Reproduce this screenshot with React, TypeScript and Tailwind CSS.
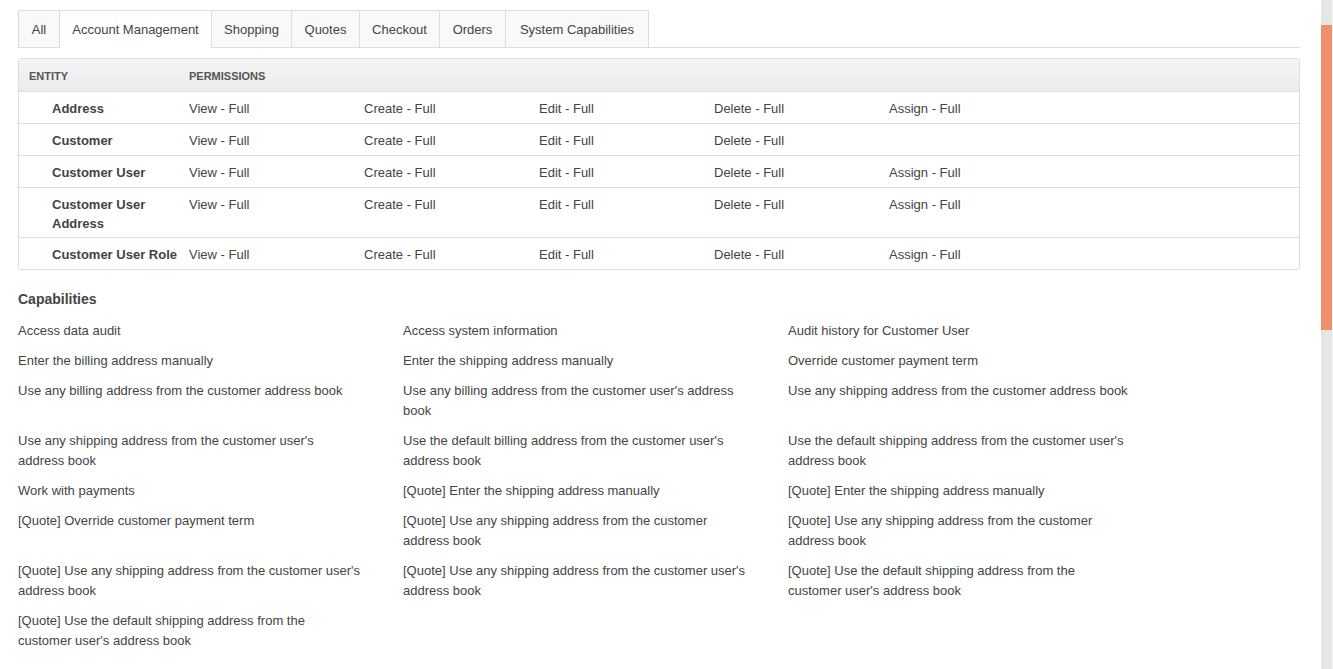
import React from "react";

const tabs = [
  { label: "All", w: "w-[42px]" },
  { label: "Account Management", w: "w-[152px]", active: true },
  { label: "Shopping", w: "w-[80px]" },
  { label: "Quotes", w: "w-[68px]" },
  { label: "Checkout", w: "w-[80px]" },
  { label: "Orders", w: "w-[66px]" },
  { label: "System Capabilities", w: "w-[143px]" },
];

const rows: { name: string; perms: string[] }[] = [
  { name: "Address", perms: ["View - Full", "Create - Full", "Edit - Full", "Delete - Full", "Assign - Full"] },
  { name: "Customer", perms: ["View - Full", "Create - Full", "Edit - Full", "Delete - Full", ""] },
  { name: "Customer User", perms: ["View - Full", "Create - Full", "Edit - Full", "Delete - Full", "Assign - Full"] },
  { name: "Customer User Address", perms: ["View - Full", "Create - Full", "Edit - Full", "Delete - Full", "Assign - Full"] },
  { name: "Customer User Role", perms: ["View - Full", "Create - Full", "Edit - Full", "Delete - Full", "Assign - Full"] },
];

const caps = [
  "Access data audit",
  "Access system information",
  "Audit history for Customer User",
  "Enter the billing address manually",
  "Enter the shipping address manually",
  "Override customer payment term",
  "Use any billing address from the customer address book",
  "Use any billing address from the customer user's address book",
  "Use any shipping address from the customer address book",
  "Use any shipping address from the customer user's address book",
  "Use the default billing address from the customer user's address book",
  "Use the default shipping address from the customer user's address book",
  "Work with payments",
  "[Quote] Enter the shipping address manually",
  "[Quote] Enter the shipping address manually",
  "[Quote] Override customer payment term",
  "[Quote] Use any shipping address from the customer address book",
  "[Quote] Use any shipping address from the customer address book",
  "[Quote] Use any shipping address from the customer user's address book",
  "[Quote] Use any shipping address from the customer user's address book",
  "[Quote] Use the default shipping address from the customer user's address book",
  "[Quote] Use the default shipping address from the customer user's address book",
];

export default function App() {
  return (
    <div className="flex h-[669px] w-[1333px] overflow-hidden bg-white font-['Liberation_Sans',Arial,sans-serif] text-[13px] text-[#444]">
      <div className="flex-1 pl-[18px] pr-[21px] pt-[10px]">
        {/* Tabs */}
        <div className="flex border-b border-[#ddd]">
          {tabs.map((t, i) => (
            <div
              key={t.label}
              className={
                "flex h-[37px] items-center justify-center border-t border-r border-[#ddd] pt-[2px] leading-[18px] " +
                t.w +
                (i === 0 ? " border-l" : "") +
                (t.active ? " -mb-px h-[38px] bg-white pb-px" : " bg-[#f9f9f9]")
              }
            >
              {t.label}
            </div>
          ))}
        </div>

        {/* Table */}
        <div className="mt-[10px] overflow-hidden rounded-[3px] border border-[#ddd]">
          <div className="grid h-[33px] grid-cols-[170px_1fr] items-center border-b border-[#ddd] bg-gradient-to-b from-[#f5f5f5] to-[#ebebeb] pt-[2px] text-[11px] font-bold uppercase text-[#555]">
            <div className="pl-[10px]">Entity</div>
            <div>Permissions</div>
          </div>
          {rows.map((r, i) => (
            <div
              key={r.name}
              className={
                "grid grid-cols-[170px_175px_175px_175px_175px_175px_1fr] pt-[7px] leading-[19px]" +
                (i > 0 ? " border-t border-[#ddd]" : "") +
                (i === 3 ? " pb-[4px]" : " pb-[5px]")
              }
            >
              <div className="pl-[33px] pr-[4px] font-bold">{r.name}</div>
              {r.perms.map((p, j) => (
                <div key={j}>{p}</div>
              ))}
              <div />
            </div>
          ))}
        </div>

        {/* Capabilities */}
        <h3 className="mt-[19px] mb-[12px] text-[14px] font-bold leading-[20px] text-[#444]">Capabilities</h3>
        <div className="grid grid-cols-[385px_385px_385px] gap-y-[10px] leading-[20px]">
          {caps.map((c, i) => (
            <div key={i} className="max-w-[343px]">
              {c}
            </div>
          ))}
        </div>
      </div>

      {/* Scrollbar */}
      <div className="flex w-[12px] shrink-0">
        <div className="w-[11px] bg-[#e6e6e6] pt-[25px]">
          <div className="h-[305px] bg-[#f0906a]" />
        </div>
        <div className="w-[1px] bg-[#f4f4f4]" />
      </div>
    </div>
  );
}
